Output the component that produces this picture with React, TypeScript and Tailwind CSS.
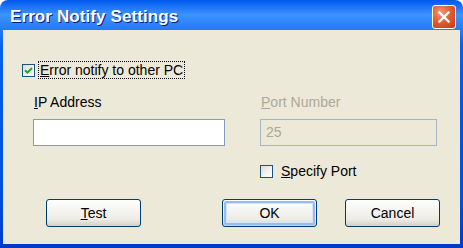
import React from "react";

function Check({ checked }: { checked?: boolean }) {
  return (
    <div className="w-[13px] h-[13px] border border-[#1c5180] bg-[linear-gradient(135deg,#dcdcd7_0%,#f4f4f0_60%,#ffffff_100%)] flex items-center justify-center shrink-0">
      {checked && (
        <svg width="9" height="9" viewBox="0 0 9 9">
          <path d="M1 4.2 L3.4 6.6 L8 2" stroke="#21a121" strokeWidth="2" fill="none" />
        </svg>
      )}
    </div>
  );
}

function XPButton({ children, def }: { children: React.ReactNode; def?: boolean }) {
  return (
    <div className="w-[95px] h-[28px] rounded-[3px] border border-[#003c74] bg-[linear-gradient(180deg,#ffffff_0%,#f7f7f4_30%,#ecebe6_75%,#d6d0c5_100%)] p-[1px]">
      <div
        className={
          "w-full h-full rounded-[2px] flex items-center justify-center text-[14px] text-black " +
          (def ? "border-2 border-[#9bbbee] shadow-[inset_0_0_0_1px_#cee7ff]" : "")
        }
      >
        {children}
      </div>
    </div>
  );
}

export default function App() {
  return (
    <div
      className="w-[463px] h-[248px] flex flex-col rounded-t-[8px] bg-[linear-gradient(180deg,#0058ee_0%,#3d93ff_6%,#0a61ee_18%,#0054e3_50%,#0050dc_80%,#0638c8_100%)] overflow-hidden"
      style={{ fontFamily: '"Liberation Sans", Arial, sans-serif' }}
    >
      <div className="h-[30px] flex items-center justify-between pl-[10px] pr-[7px] shrink-0">
        <span className="text-white font-bold text-[17px] [text-shadow:1px_1px_0_#0a1a8a] tracking-[0.1px] mt-[3px]">
          Error Notify Settings
        </span>
        <div className="w-[24px] h-[24px] rounded-[3px] border border-white bg-[radial-gradient(circle_at_35%_30%,#f09a7b_0%,#e35d32_45%,#c5381a_100%)] flex items-center justify-center mt-[4px]">
          <svg width="14" height="14" viewBox="0 0 14 14">
            <path d="M2.5 2.5 L11.5 11.5 M11.5 2.5 L2.5 11.5" stroke="white" strokeWidth="2.4" strokeLinecap="square" />
          </svg>
        </div>
      </div>
      <div className="flex-1 mx-[3px] mb-[4px] bg-[#ece9d8] flex flex-col text-[14px] text-black">
        <div className="flex items-center mt-[32px] ml-[19px]">
          <Check checked />
          <span className="ml-[4px] px-[1px] leading-[16px] outline-1 outline-dotted outline-black">
            <span className="underline">E</span>rror notify to other PC
          </span>
        </div>
        <div className="flex mt-[16px] ml-[30px]">
          <div className="flex flex-col w-[192px]">
            <span className="ml-[1px] leading-[16px]">
              <span className="underline">I</span>P Address
            </span>
            <div className="mt-[9px] h-[27px] border border-[#7f9db9] bg-white" />
          </div>
          <div className="flex flex-col w-[177px] ml-[35px]">
            <span className="ml-[1px] leading-[16px] text-[#aca899]">
              <span className="underline">P</span>ort Number
            </span>
            <div className="mt-[9px] h-[27px] border border-[#aab4bf] bg-[#ece9d8] flex items-center pl-[5px] text-[#aca899]">
              25
            </div>
          </div>
        </div>
        <div className="flex items-center mt-[17px] ml-[257px]">
          <Check />
          <span className="ml-[8px] leading-[16px]">
            <span className="underline">S</span>pecify Port
          </span>
        </div>
        <div className="flex mt-[20px] ml-[43px]">
          <XPButton>
            <span>
              <span className="underline">T</span>est
            </span>
          </XPButton>
          <div className="ml-[81px]">
            <XPButton def>OK</XPButton>
          </div>
          <div className="ml-[28px]">
            <XPButton>Cancel</XPButton>
          </div>
        </div>
      </div>
    </div>
  );
}
